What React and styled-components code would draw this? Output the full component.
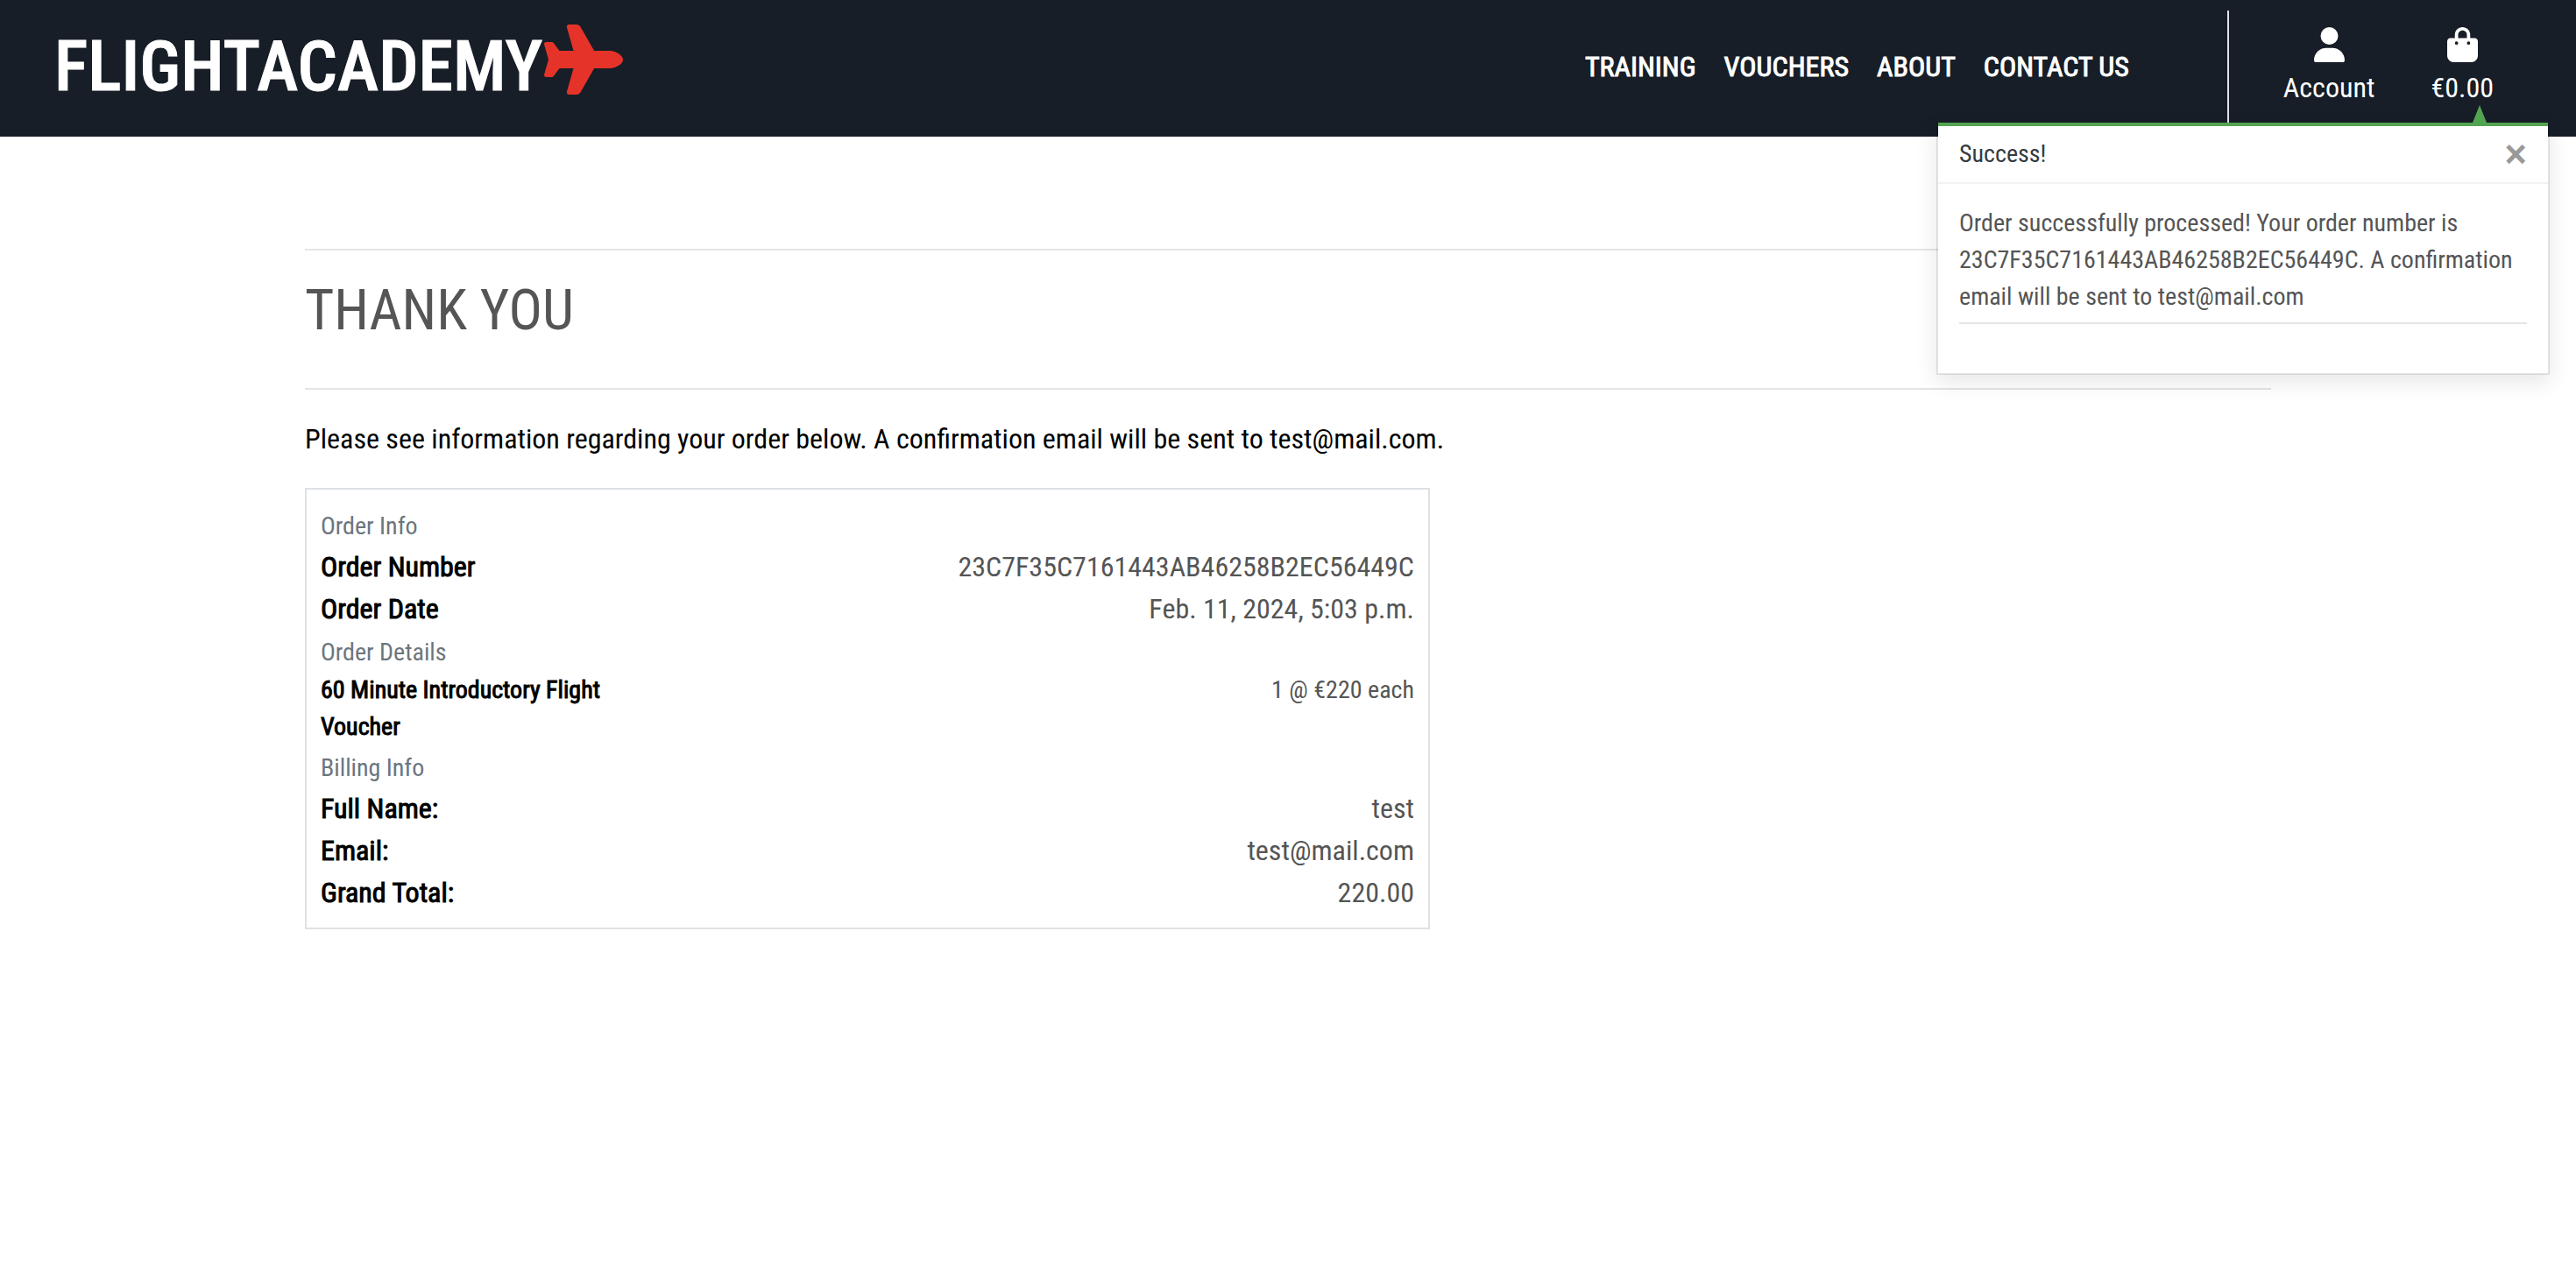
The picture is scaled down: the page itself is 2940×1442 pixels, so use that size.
import React from "react";
import styled, { createGlobalStyle } from "styled-components";
import { FaPlane, FaUser, FaBagShopping } from "react-icons/fa6";

const GlobalStyle = createGlobalStyle`
  *, *::before, *::after { box-sizing: border-box; }
  body {
    margin: 0;
    background: #fff;
    color: #555;
    font-family: "Roboto Condensed", Roboto, sans-serif;
    font-size: 32px;
    line-height: 48px;
  }
  h1, h2, p, dl, dd { margin: 0; }
  a { color: inherit; text-decoration: none; }
`;

const Header = styled.header`
  position: relative;
  display: flex;
  align-items: center;
  justify-content: space-between;
  height: 156px;
  padding: 0 62px;
  background: #171e27;
  color: #fff;
`;

const Brand = styled.a`
  display: flex;
  align-items: center;
  gap: 2px;
  padding-bottom: 4px;
  font-size: 80px;
  line-height: 96px;
  font-weight: 500;
  -webkit-text-stroke: 1px currentColor;
  svg { width: 90px; height: 80px; color: #e63329; margin-bottom: 16px; }
`;

const HeaderRight = styled.div`
  display: flex;
  align-items: stretch;
  height: 132px;
`;

const Nav = styled.nav`
  display: flex;
  align-items: center;
  gap: 32px;
  padding: 0 112px 4px 0;
  text-transform: uppercase;
  -webkit-text-stroke: 1px currentColor;
`;

const Actions = styled.div`
  display: flex;
  align-items: flex-start;
  gap: 64px;
  padding: 19px 32px 0 62px;
  border-left: 2px solid #dee2e6;
`;

const Action = styled.a`
  display: flex;
  flex-direction: column;
  align-items: center;
  gap: 5px;
  svg { width: 35px; height: 40px; }
`;

const Toast = styled.section`
  position: absolute;
  top: 140px;
  right: 30px;
  width: 700px;
  border: 2px solid rgba(0, 0, 0, 0.1);
  border-top: 0;
  background: #fff;
  background-clip: padding-box;
  box-shadow: 0 8px 24px rgba(0, 0, 0, 0.1);
  color: #555;
  font-size: 28px;
  line-height: 42px;
  &::before {
    content: "";
    position: absolute;
    right: 70px;
    bottom: 100%;
    border: 8px solid transparent;
    border-top: 0;
    border-bottom: 20px solid #53a451;
  }
`;

const ToastHeader = styled.div`
  display: flex;
  align-items: center;
  justify-content: space-between;
  height: 70px;
  padding: 0 24px;
  border-top: 4px solid #53a451;
  border-bottom: 2px solid #f2f2f2;
  color: #343a40;
`;

const Close = styled.button`
  padding: 0;
  border: 0;
  background: none;
  color: #999;
  font-family: Roboto, sans-serif;
  font-size: 48px;
  font-weight: 500;
  line-height: 48px;
`;

const ToastBody = styled.div`
  padding: 24px 24px 56px;
`;

const ToastText = styled.p`
  padding-bottom: 8px;
  border-bottom: 2px solid #e5e5e5;
`;

const Main = styled.main`
  max-width: 2280px;
  margin: 0 auto;
  padding: 128px 18px 64px;
`;

const Title = styled.h1`
  margin-bottom: 32px;
  padding: 30px 0 50px;
  border: solid #e5e5e5;
  border-width: 2px 0;
  font-size: 64px;
  line-height: 77px;
  font-weight: 400;
  text-transform: uppercase;
`;

const Intro = styled.p`
  margin-bottom: 32px;
  color: #000;
`;

const Grid = styled.div`
  display: grid;
  grid-template-columns: repeat(12, 1fr);
  column-gap: 60px;
`;

const OrderCard = styled.section`
  grid-column: span 7;
  padding: 16px;
  border: 2px solid #dee2e6;
`;

const GroupTitle = styled.h2`
  font-size: 32px;
  line-height: 48px;
  font-weight: 400;
  color: #6c757d;
  small { font-size: 28px; line-height: 1; }
`;

const Row = styled.div`
  display: grid;
  grid-template-columns: 1fr 2fr;
  font-size: ${(p) => (p.$small ? 28 : 32)}px;
  line-height: ${(p) => (p.$small ? 42 : 48)}px;
  dt {
    color: #000;
    -webkit-text-stroke: 1px currentColor;
  }
  dd { text-align: right; }
`;

const groups = [
  {
    title: "Order Info",
    rows: [
      ["Order Number", "23C7F35C7161443AB46258B2EC56449C"],
      ["Order Date", "Feb. 11, 2024, 5:03 p.m."],
    ],
  },
  {
    title: "Order Details",
    small: true,
    rows: [["60 Minute Introductory Flight Voucher", "1 @ €220 each"]],
  },
  {
    title: "Billing Info",
    rows: [
      ["Full Name:", "test"],
      ["Email:", "test@mail.com"],
      ["Grand Total:", "220.00"],
    ],
  },
];

export default function App() {
  return (
    <>
      <GlobalStyle />
      <Header>
        <Brand href="#">FLIGHTACADEMY<FaPlane aria-hidden="true" /></Brand>
        <HeaderRight>
          <Nav>
            {["Training", "Vouchers", "About", "Contact Us"].map((label) => (
              <a key={label} href="#">{label}</a>
            ))}
          </Nav>
          <Actions>
            <Action href="#"><FaUser aria-hidden="true" />Account</Action>
            <Action href="#"><FaBagShopping aria-hidden="true" />€0.00</Action>
          </Actions>
        </HeaderRight>
        <Toast role="status">
          <ToastHeader>
            Success!
            <Close type="button" aria-label="Close">×</Close>
          </ToastHeader>
          <ToastBody>
            <ToastText>
              Order successfully processed! Your order number is
              23C7F35C7161443AB46258B2EC56449C. A confirmation email will be
              sent to test@mail.com
            </ToastText>
          </ToastBody>
        </Toast>
      </Header>
      <Main>
        <Title>Thank You</Title>
        <Intro>
          Please see information regarding your order below. A confirmation
          email will be sent to test@mail.com.
        </Intro>
        <Grid>
          <OrderCard>
            {groups.map((group) => (
              <div key={group.title}>
                <GroupTitle><small>{group.title}</small></GroupTitle>
                <dl>
                  {group.rows.map(([label, value]) => (
                    <Row key={label} $small={group.small}>
                      <dt>{label}</dt>
                      <dd>{value}</dd>
                    </Row>
                  ))}
                </dl>
              </div>
            ))}
          </OrderCard>
        </Grid>
      </Main>
    </>
  );
}
